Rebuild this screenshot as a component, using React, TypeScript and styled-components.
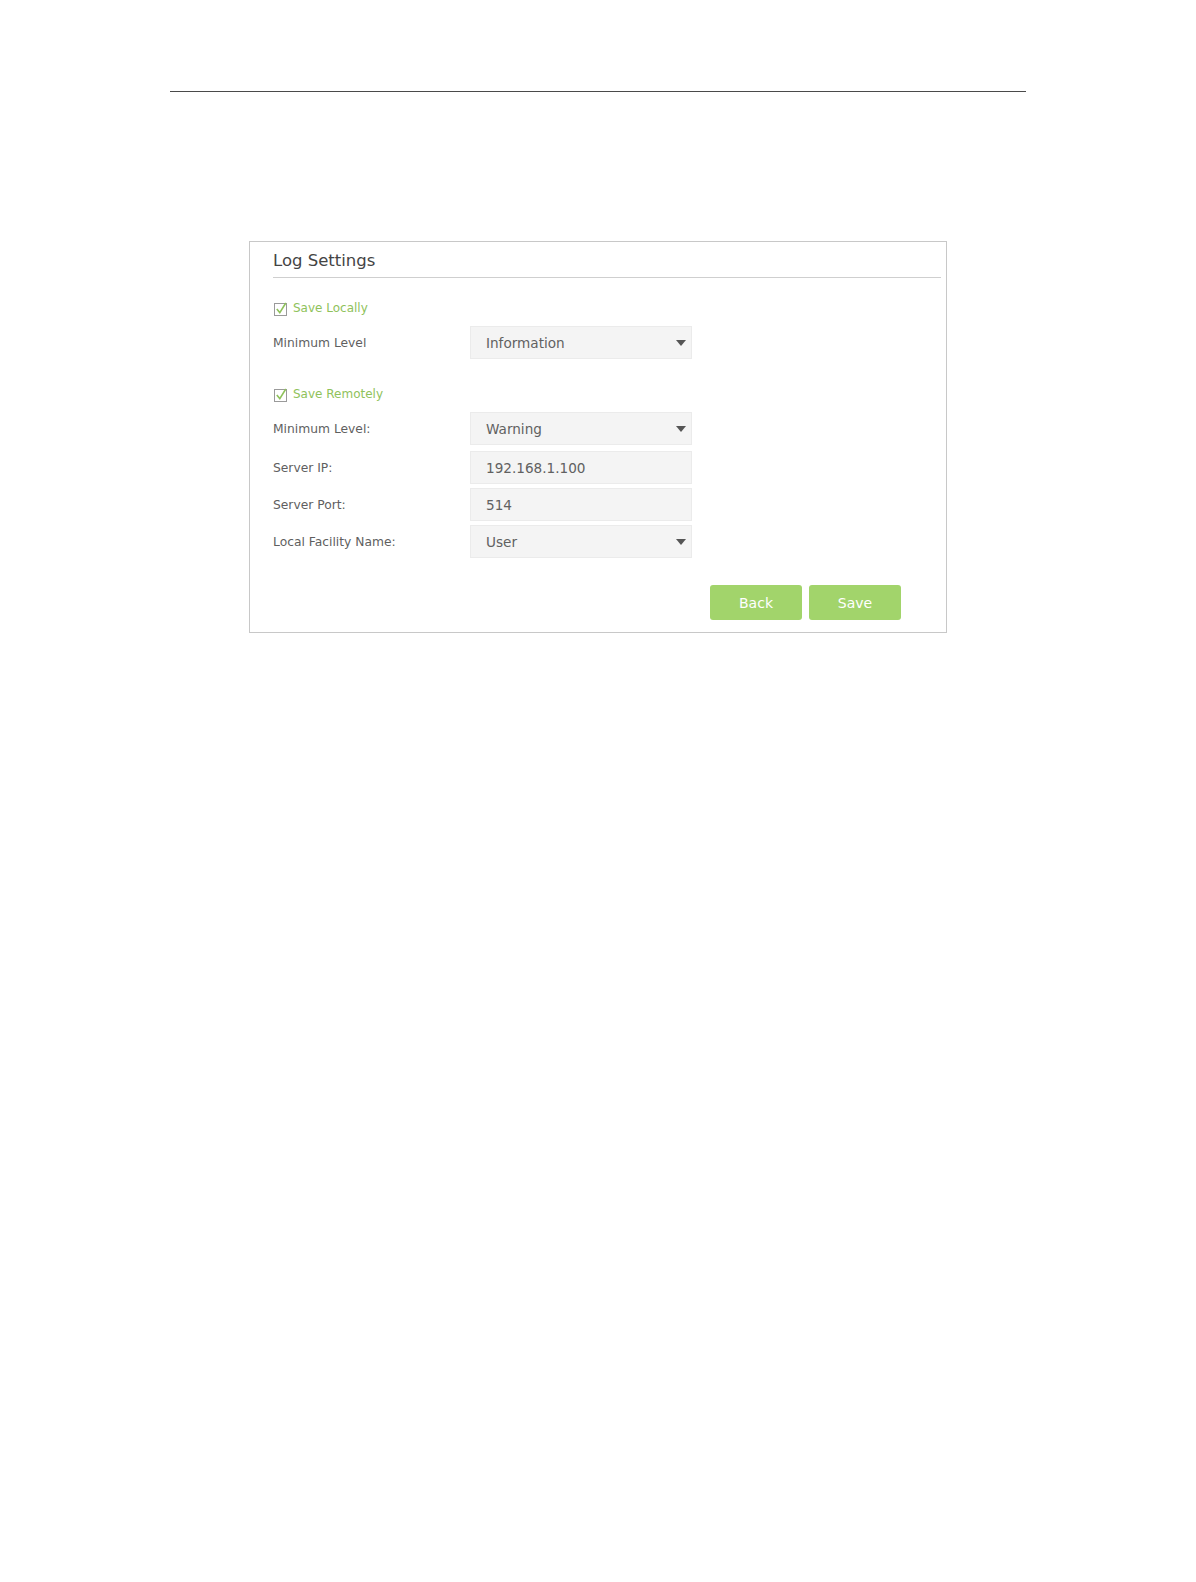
import React from "react";
import styled, { createGlobalStyle } from "styled-components";

const GlobalStyle = createGlobalStyle`
  html, body {
    margin: 0;
    padding: 0;
    background: #fff;
  }
  body {
    font-family: "DejaVu Sans", Verdana, sans-serif;
  }
`;

const Page = styled.div`
  width: 1196px;
  min-height: 1582px;
  padding-top: 91px;
  box-sizing: border-box;
`;

const TopRule = styled.div`
  margin-left: 170px;
  width: 856px;
  height: 1px;
  background: #4a4a4a;
`;

const Card = styled.div`
  margin: 149px 0 0 249px;
  width: 698px;
  box-sizing: border-box;
  border: 1px solid #c8c8c8;
  padding: 0 5px 12px 23px;
`;

const Header = styled.div`
  padding: 9px 0 6px;
  border-bottom: 1px solid #cfcfcf;
`;

const Title = styled.h2`
  margin: 0;
  font-size: 16.5px;
  line-height: 20px;
  font-weight: normal;
  color: #444;
`;

const CheckRow = styled.label<{ $top: number }>`
  display: flex;
  align-items: center;
  gap: 5px;
  height: 16px;
  margin-top: ${(p) => p.$top}px;
  font-size: 12px;
  color: #8fc25b;
`;

const FieldRow = styled.div<{ $top: number }>`
  display: flex;
  align-items: center;
  height: 33px;
  margin-top: ${(p) => p.$top}px;
`;

const Label = styled.div`
  width: 197px;
  font-size: 12.3px;
  color: #5f5f5f;
`;

const Field = styled.div`
  width: 222px;
  height: 33px;
  box-sizing: border-box;
  display: flex;
  align-items: center;
  justify-content: space-between;
  padding: 0 5px 0 15px;
  background: #f4f4f4;
  border: 1px solid #ebebeb;
  font-size: 13.6px;
  color: #616161;
`;

const Arrow = styled.span`
  width: 0;
  height: 0;
  border-left: 5px solid transparent;
  border-right: 5px solid transparent;
  border-top: 6px solid #555;
  margin-top: 1px;
`;

const Actions = styled.div`
  display: flex;
  justify-content: flex-end;
  gap: 7px;
  margin-top: 27px;
  padding-right: 40px;
`;

const Button = styled.button`
  width: 92px;
  height: 35px;
  border: none;
  border-radius: 3px;
  background: #a2d46b;
  color: #fff;
  font-family: "DejaVu Sans", Verdana, sans-serif;
  font-size: 14px;
  padding: 0;
`;

const CheckIcon = () => (
  <svg width="15" height="15" viewBox="0 0 15 15">
    <rect x="1.5" y="2.5" width="12" height="12" fill="none" stroke="#9a9a9a" />
    <path d="M3.8 8 L6.8 11.6 L12.8 2" fill="none" stroke="#8fc25b" strokeWidth="1.6" />
  </svg>
);

type Row = { label: string; value: string; select?: boolean; top: number };

const remoteRows: Row[] = [
  { label: "Minimum Level:", value: "Warning", select: true, top: 10 },
  { label: "Server IP:", value: "192.168.1.100", top: 6 },
  { label: "Server Port:", value: "514", top: 4 },
  { label: "Local Facility Name:", value: "User", select: true, top: 4 },
];

const App: React.FC = () => {
  return (
    <Page>
      <GlobalStyle />
      <TopRule />
      <Card>
        <Header>
          <Title>Log Settings</Title>
        </Header>

        <CheckRow $top={22}>
          <CheckIcon />
          Save Locally
        </CheckRow>
        <FieldRow $top={10}>
          <Label>Minimum Level</Label>
          <Field>
            Information
            <Arrow />
          </Field>
        </FieldRow>

        <CheckRow $top={27}>
          <CheckIcon />
          Save Remotely
        </CheckRow>
        {remoteRows.map((r) => (
          <FieldRow key={r.label} $top={r.top}>
            <Label>{r.label}</Label>
            <Field>
              {r.value}
              {r.select && <Arrow />}
            </Field>
          </FieldRow>
        ))}

        <Actions>
          <Button>Back</Button>
          <Button>Save</Button>
        </Actions>
      </Card>
    </Page>
  );
};

export default App;
